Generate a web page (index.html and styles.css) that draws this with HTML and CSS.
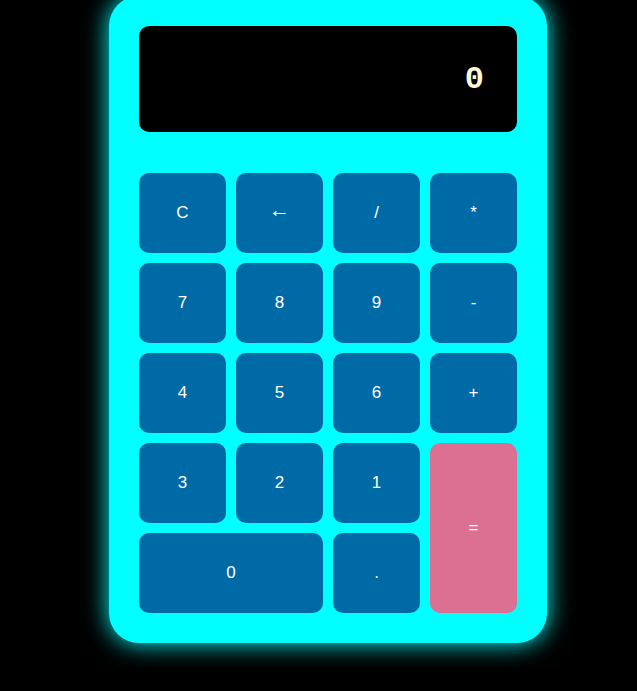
FILE: index.html
```html
<!DOCTYPE html>
<html>
<head>
<meta charset="utf-8">
<link rel="stylesheet" href="styles.css">
</head>
<body>
<div class="page">
  <div class="calculator">
    <div class="display"><span class="value">0</span></div>
    <div class="keys">
      <button class="key">C</button>
      <button class="key arrow">←</button>
      <button class="key">/</button>
      <button class="key">*</button>
      <button class="key">7</button>
      <button class="key">8</button>
      <button class="key">9</button>
      <button class="key">-</button>
      <button class="key">4</button>
      <button class="key">5</button>
      <button class="key">6</button>
      <button class="key">+</button>
      <button class="key">3</button>
      <button class="key">2</button>
      <button class="key">1</button>
      <button class="key equals">=</button>
      <button class="key zero">0</button>
      <button class="key">.</button>
    </div>
  </div>
</div>
</body>
</html>
```
FILE: styles.css
```css
html, body {
  margin: 0;
  padding: 0;
  background: #000;
  height: 100%;
  overflow: hidden;
}
.page {
  display: flex;
  justify-content: center;
  padding-left: 19px;
}
.calculator {
  margin-top: -4px;
  width: 378px;
  padding: 30px;
  background: #00ffff;
  border-radius: 30px;
  box-shadow: 0 0 25px #00ffff;
  display: flex;
  flex-direction: column;
  gap: 41px;
}
.display {
  height: 106px;
  background: #000;
  border-radius: 10px;
  display: flex;
  align-items: center;
  justify-content: flex-end;
  padding-right: 33px;
  box-sizing: border-box;
}
.value {
  font-family: "Liberation Mono", "Courier New", monospace;
  font-weight: bold;
  font-size: 32px;
  color: #fff8d6;
}
.keys {
  display: grid;
  grid-template-columns: repeat(4, 87px);
  grid-auto-rows: 80px;
  gap: 10px;
}
.key {
  border: none;
  margin: 0;
  padding: 0;
  background: #006aa6;
  color: #fff;
  border-radius: 10px;
  font-family: "Liberation Sans", Arial, sans-serif;
  font-size: 17px;
}
.key.arrow {
  font-size: 21px;
  padding-bottom: 7px;
}
.key.zero {
  grid-column: span 2;
}
.key.equals {
  grid-row: span 2;
  background: #db7093;
}
```
